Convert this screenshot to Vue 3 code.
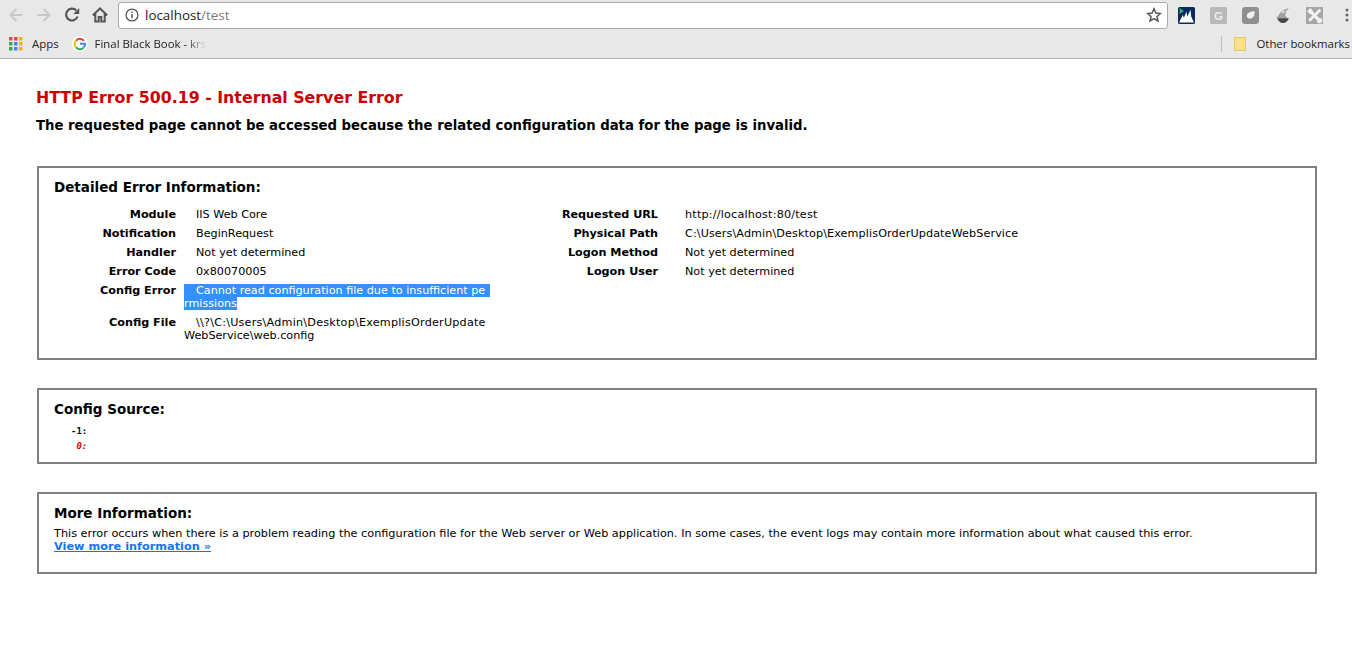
<script setup>
const leftRows = [
  ['Module', 'IIS Web Core'],
  ['Notification', 'BeginRequest'],
  ['Handler', 'Not yet determined'],
  ['Error Code', '0x80070005'],
]
const rightRows = [
  ['Requested URL', 'http://localhost:80/test', 'wide-a'],
  ['Physical Path', 'C:\\Users\\Admin\\Desktop\\ExemplisOrderUpdateWebService', 'wide-b'],
  ['Logon Method', 'Not yet determined', ''],
  ['Logon User', 'Not yet determined', ''],
]
</script>

<template>
  <div class="page">
    <header class="chrome">
      <div class="toolbar">
        <div class="nav">
          <svg class="navicon" viewBox="0 0 16 16"><path d="M14.500 8H3M8.500 2 2.500 8l6 6" fill="none" stroke="#c8c8c8" stroke-width="2"/></svg>
          <svg class="navicon" viewBox="0 0 16 16"><path d="M1.500 8H13M7.500 2l6 6-6 6" fill="none" stroke="#c8c8c8" stroke-width="2"/></svg>
          <svg class="navicon" viewBox="0 0 16 16"><path d="M13.600 9.500A5.900 5.900 0 1 1 12.200 3.400" fill="none" stroke="#555" stroke-width="2.200"/><path d="M9.300 7h5.900V1.100z" fill="#555"/></svg>
          <svg class="navicon" viewBox="0 0 16 16"><path d="M.8 8.400 8 1.500l7.200 6.900M3.300 6.500v8h3.400V10h2.600v4.500h3.400v-8" fill="none" stroke="#555" stroke-width="2"/></svg>
        </div>
        <div class="omnibox">
          <svg class="info" viewBox="0 0 14 14"><circle cx="7" cy="7" r="5.900" fill="none" stroke="#555" stroke-width="1.300"/><path d="M7 6v4.200M7 3.600V5" stroke="#555" stroke-width="1.500"/></svg>
          <span class="url">localhost<span class="path">/test</span></span>
          <svg class="star" viewBox="0 0 16 16"><path d="m8 1.800 1.900 4.200 4.500.5-3.400 3 1 4.500L8 11.700 4 14l1-4.500-3.400-3 4.500-.5z" fill="none" stroke="#555" stroke-width="1.500"/></svg>
        </div>
        <div class="extensions">
          <svg class="ext" viewBox="0 0 16 16"><rect width="16" height="16" rx="1.500" fill="#0b2a5c"/><path d="M1 14.500 4.500 7.500 5.500 10 8 4.500l.8 4.500 3-6.500.6 6.500 2.600 5.500z" fill="#fff"/><path d="M1.500 1v5.500l4-2.800z" fill="#35b06a"/></svg>
          <svg class="ext" viewBox="0 0 16 16"><rect width="16" height="16" rx="1.500" fill="#b9b9b9"/><text x="8" y="12" text-anchor="middle" class="glet">G</text></svg>
          <svg class="ext" viewBox="0 0 16 16"><rect width="16" height="16" rx="3" fill="#8f8f8f"/><path d="M4.500 8.500C4.500 5.500 8 4 12 4c0 4-1.500 7-4.500 7C6 11 4.500 10 4.500 8.500z" fill="#f0f0f0"/></svg>
          <svg class="ext" viewBox="0 0 16 16"><path d="M14 1C10 2 6 4 4.500 7.500L2 10.500l11 .5-2.500-3 1-4z" fill="#a2a2a2"/><path d="M6 4.500 11 3l-2 3z" fill="#d8d8d8"/><path d="M3 10.500h11c-1 3-3 4.500-5.500 4.500S4 13.500 3 10.500z" fill="#474747"/></svg>
          <svg class="ext" viewBox="0 0 16 16"><rect width="16" height="16" fill="#a6a6a6"/><path d="M3.500 3.500l9 9" stroke="#f2f2f2" stroke-width="3"/><path d="M13.500 2.500 3 13" stroke="#f2f2f2" stroke-width="2.600"/><path d="M1 4 4 1l2.500 2.500-3 3zM11 15l-1-3 2-2 3 1 .5 2.500-2 2z" fill="#f2f2f2"/></svg>
          <svg class="dots" viewBox="0 0 4 16"><circle cx="2" cy="3" r="1.500" fill="#666"/><circle cx="2" cy="8" r="1.500" fill="#666"/><circle cx="2" cy="13" r="1.500" fill="#666"/></svg>
        </div>
      </div>
      <div class="bookmarks">
        <svg class="apps" viewBox="0 0 14 14">
          <rect x="0" y="0" width="3.500" height="3.500" fill="#e04a3f"/><rect x="5" y="0" width="3.500" height="3.500" fill="#e04a3f"/><rect x="10" y="0" width="3.500" height="3.500" fill="#f4b400"/>
          <rect x="0" y="5" width="3.500" height="3.500" fill="#34a853"/><rect x="5" y="5" width="3.500" height="3.500" fill="#4285f4"/><rect x="10" y="5" width="3.500" height="3.500" fill="#f4b400"/>
          <rect x="0" y="10" width="3.500" height="3.500" fill="#34a853"/><rect x="5" y="10" width="3.500" height="3.500" fill="#4285f4"/><rect x="10" y="10" width="3.500" height="3.500" fill="#f4b400"/>
        </svg>
        <span class="bm apps-label">Apps</span>
        <svg class="google" viewBox="0 0 16 16">
          <circle cx="8" cy="8" r="8" fill="#fff"/>
          <path d="M12 4.800A5 5 0 0 0 4 4.700" fill="none" stroke="#ea4335" stroke-width="2"/>
          <path d="M4 4.700a5 5 0 0 0 0 6.600" fill="none" stroke="#fbbc05" stroke-width="2"/>
          <path d="M4 11.300a5 5 0 0 0 7.500.3" fill="none" stroke="#34a853" stroke-width="2"/>
          <path d="M8 7.800h5c.2 1.600-.3 2.800-1.500 3.800" fill="none" stroke="#4285f4" stroke-width="2"/>
        </svg>
        <span class="bm final">Final Black Book - krs</span>
        <span class="grow"></span>
        <span class="divider"></span>
        <svg class="folder" viewBox="0 0 12 14"><path d="M.5.500h11v13H.5z" fill="#fbe08a" stroke="#e8c860"/></svg>
        <span class="bm other">Other bookmarks</span>
      </div>
    </header>

    <main class="content">
      <h1>HTTP Error 500.19 - Internal Server Error</h1>
      <h2>The requested page cannot be accessed because the related configuration data for the page is invalid.</h2>

      <section class="box details">
        <h3>Detailed Error Information:</h3>
        <div class="columns">
          <div class="col-left">
            <div v-for="r in leftRows" :key="r[0]" class="row">
              <div class="th">{{ r[0] }}</div>
              <div class="td">{{ r[1] }}</div>
            </div>
            <div class="row wrap">
              <div class="th">Config Error</div>
              <div class="td-wrap">
                <div class="line selected first">Cannot read configuration file due to insufficient pe</div>
                <div class="line"><span class="selected">rmissions</span></div>
              </div>
            </div>
            <div class="row wrap">
              <div class="th">Config File</div>
              <div class="td-wrap">
                <div class="line first wide-c">\\?\C:\Users\Admin\Desktop\ExemplisOrderUpdate</div>
                <div class="line">WebService\web.config</div>
              </div>
            </div>
          </div>
          <div class="col-right">
            <div v-for="r in rightRows" :key="r[0]" class="row">
              <div class="th rt">{{ r[0] }}</div>
              <div class="td rd" :class="r[2]">{{ r[1] }}</div>
            </div>
          </div>
        </div>
      </section>

      <section class="box source">
        <h3>Config Source:</h3>
        <pre class="code"><span class="ln">-1: </span>
<em class="ln err"> 0: </em></pre>
      </section>

      <section class="box more">
        <h3>More Information:</h3>
        <p>This error occurs when there is a problem reading the configuration file for the Web server or Web application. In some cases, the event logs may contain more information about what caused this error.</p>
        <a class="link" href="#">View more information »</a>
      </section>
    </main>
  </div>
</template>

<style>
body { margin: 0; background: #fff; }
</style>

<style scoped>
.page { width: 1352px; height: 645px; overflow: hidden; background: #fff; font-family: "DejaVu Sans", Verdana, sans-serif; color: #000; }
.chrome { height: 59px; box-sizing: border-box; background: #e8e8e8; border-bottom: 1px solid #b4b4b4; font-family: "Open Sans", "Noto Sans", sans-serif; }
.toolbar { height: 30px; display: flex; align-items: center; }
.nav { display: flex; width: 118px; padding-left: 8px; box-sizing: border-box; gap: 12px; align-items: center; }
.navicon { width: 16px; height: 16px; }
.omnibox { width: 1050px; height: 27px; box-sizing: border-box; background: #fff; border: 1px solid #a9a9a9; border-radius: 3px; display: flex; align-items: center; padding: 0 5px 0 6px; }
.info { width: 14px; height: 14px; margin-right: 6px; }
.url { flex: 1; font-size: 13.400px; color: #222; }
.path { color: #7a7a7a; }
.star { width: 16px; height: 16px; }
.extensions { display: flex; align-items: center; flex: 1; padding-left: 10px; gap: 15px; }
.ext { width: 17px; height: 17px; }
.glet { font-family: "Liberation Sans", sans-serif; font-size: 11px; font-weight: bold; fill: #ececec; }
.dots { width: 4px; height: 16px; margin-left: 7px; }
.bookmarks { height: 28px; display: flex; align-items: center; font-size: 11.400px; color: #222; padding-bottom: 1px; box-sizing: border-box; }
.apps { width: 14px; height: 14px; margin-left: 9px; }
.bm { white-space: nowrap; }
.apps-label { margin-left: 9px; }
.google { width: 16px; height: 16px; margin-left: 13px; }
.final { margin-left: 7px; -webkit-mask-image: linear-gradient(90deg, #000 82%, transparent); mask-image: linear-gradient(90deg, #000 82%, transparent); }
.grow { flex: 1; }
.divider { width: 1px; height: 16px; background: #bdbdbd; margin-right: 12px; }
.folder { width: 12px; height: 14px; margin-right: 10px; }
.other { padding-right: 2px; }
.content { padding: 29px 35px 0 36px; }
h1 { margin: 0; font-size: 15.800px; line-height: 20px; font-weight: bold; color: #c00; }
h2 { margin: 9px 0 0; font-size: 13.250px; line-height: 17px; font-weight: bold; }
h3 { margin: 0; font-size: 13.500px; line-height: 17px; font-weight: bold; }
.box { margin: 0 0 0 1px; width: 1280px; box-sizing: border-box; border: 2px solid #808080; padding: 0 15px; font-size: 11.200px; }
.details { margin-top: 32px; height: 194px; padding-top: 11px; }
.columns { display: flex; margin-top: 9px; }
.col-left { width: 438px; }
.col-right { flex: 1; }
.row { display: flex; height: 19px; line-height: 19px; }
.th { width: 106px; margin-left: 16px; text-align: right; font-weight: bold; white-space: nowrap; }
.td { margin-left: 20px; white-space: nowrap; }
.rt { width: 166px; margin-left: 0; }
.rd { margin-left: 27px; }
.wide-a { letter-spacing: .2px; }
.wide-b { letter-spacing: .1px; }
.wide-c { letter-spacing: .22px; }
.wrap { height: 32px; line-height: 13px; padding-top: 3px; box-sizing: border-box; }
.td-wrap { margin-left: 8px; width: 306px; }
.line { height: 13px; white-space: nowrap; }
.first { padding-left: 12px; }
.selected { background: #3390ff; color: #fff; }
.source { margin-top: 28px; height: 76px; padding-top: 11px; }
.code { margin: 6px 0 0 17px; font-family: "DejaVu Sans Mono", monospace; font-size: 9px; line-height: 15px; font-weight: bold; }
.ln { font-style: normal; }
.err { color: #c00; font-style: italic; }
.more { margin-top: 28px; height: 82px; padding-top: 11px; }
.more p { margin: 5px 0 0; line-height: 13px; font-size: 11.280px; }
.link { display: block; line-height: 13px; font-size: 11.300px; font-weight: bold; color: #1a73e8; text-decoration: underline; }
</style>
